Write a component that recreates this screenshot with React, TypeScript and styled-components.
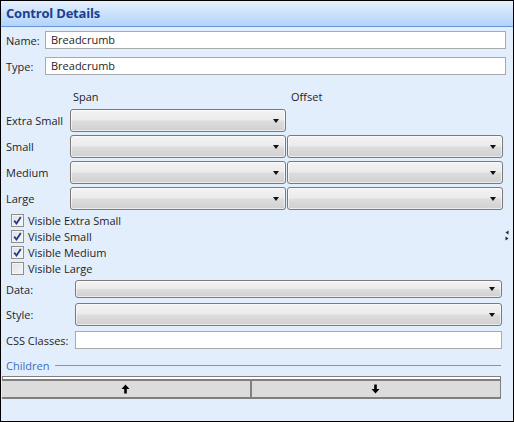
import React from "react";
import styled, { createGlobalStyle } from "styled-components";

const GlobalStyle = createGlobalStyle`
  html, body {
    margin: 0;
    padding: 0;
    background: #ffffff;
  }
  * {
    box-sizing: border-box;
  }
`;

const FONT = `"Open Sans", "Noto Sans", "Liberation Sans", sans-serif`;

const Panel = styled.div`
  position: relative;
  width: 514px;
  height: 422px;
  border: 1px solid #000;
  background: #e3eefd;
  font-family: ${FONT};
  font-size: 11px;
  color: #1e1e1e;
  display: flex;
  flex-direction: column;
`;

const Header = styled.div`
  height: 26px;
  padding: 3px 0 0 5px;
  background: linear-gradient(#e6f0fd, #b2d3fb);
  border-bottom: 1px solid #6895d6;
  color: #1b3f91;
  font-weight: 700;
  font-size: 13px;
  letter-spacing: -0.2px;
`;

const Body = styled.div`
  display: flex;
  flex-direction: column;
  padding: 0 0 0 5px;
`;

const FieldRow = styled.div<{ $top: number; $labelWidth: number }>`
  display: flex;
  align-items: center;
  margin-top: ${(p) => p.$top}px;
  & > label {
    width: ${(p) => p.$labelWidth}px;
    flex-shrink: 0;
  }
`;

const TextBox = styled.div<{ $width: number }>`
  width: ${(p) => p.$width}px;
  height: 18px;
  border: 1px solid #a8aaad;
  background: #fff;
  padding: 0 0 0 5px;
  line-height: 16px;
  font-size: 11px;
`;

const Combo = styled.div<{ $width: number; $height?: number }>`
  position: relative;
  width: ${(p) => p.$width}px;
  height: ${(p) => p.$height ?? 23}px;
  border: 1px solid #7a7a7a;
  border-radius: 3px;
  background: linear-gradient(#f3f3f3 0%, #ebebeb 48%, #dddddd 52%, #d0d0d0 100%);
  box-shadow: inset 0 0 0 1px rgba(255, 255, 255, 0.6);
  &::after {
    content: "";
    position: absolute;
    right: 6px;
    top: 50%;
    margin-top: -2px;
    border-left: 3.5px solid transparent;
    border-right: 3.5px solid transparent;
    border-top: 4px solid #111;
  }
`;

const ColHeads = styled.div`
  display: grid;
  grid-template-columns: 63px 218px 216px;
  margin-top: 14px;
  height: 16px;
  & > span:nth-child(2),
  & > span:nth-child(3) {
    padding-left: 4px;
  }
`;

const SizeGrid = styled.div`
  display: grid;
  grid-template-columns: 63px 216px 216px;
  column-gap: 1px;
  row-gap: 3px;
  margin-top: 4px;
  align-items: center;
`;

const Checks = styled.div`
  display: flex;
  flex-direction: column;
  margin-top: 2px;
  padding-left: 5px;
`;

const CheckRow = styled.label`
  display: flex;
  align-items: center;
  height: 16px;
  gap: 4px;
`;

const Box = styled.span`
  width: 13px;
  height: 13px;
  border: 1px solid #8e8f8f;
  background: linear-gradient(135deg, #e0e0e0, #f8f8f8);
  box-shadow: inset 0 0 0 1px #f4f4f4;
  display: flex;
  align-items: center;
  justify-content: center;
`;

const ChildrenHead = styled.div`
  display: flex;
  align-items: center;
  gap: 6px;
  margin-top: 9px;
  padding-right: 12px;
  color: #3a6cc0;
  &::after {
    content: "";
    flex: 1;
    height: 1px;
    background: #6a9ad8;
  }
`;

const ChildGrid = styled.div`
  margin: 3px 12px 0 -4px;
  border: 1px solid #7f7f7f;
  border-bottom: none;
  background: #fff;
  padding-top: 2px;
  display: grid;
  grid-template-columns: 1fr 1fr;
`;

const MoveButton = styled.div`
  height: 20px;
  background: #dcdcdc;
  border-top: 2px solid #7f7f7f;
  border-bottom: 2px solid #7f7f7f;
  display: flex;
  align-items: center;
  justify-content: center;
  &:first-child {
    border-right: 2px solid #7f7f7f;
    margin-left: -1px;
  }
`;

const Grip = styled.div`
  position: absolute;
  right: 4px;
  top: 229px;
  display: flex;
  flex-direction: column;
  gap: 1px;
`;

const Check = ({ on }: { on: boolean }) => (
  <Box>
    {on && (
      <svg width="9" height="9" viewBox="0 0 9 9">
        <path d="M1.2 4.6 L3.5 7.4 L7.8 1" stroke="#26398b" strokeWidth="1.8" fill="none" />
      </svg>
    )}
  </Box>
);

const Arrow = ({ up }: { up: boolean }) => (
  <svg width="9" height="10" viewBox="0 0 9 10">
    <g transform={up ? "" : "rotate(180 4.5 5)"}>
      <path d="M4.5 0.5 L8.5 5 L5.8 5 L5.8 9.5 L3.2 9.5 L3.2 5 L0.5 5 Z" fill="#000" />
    </g>
  </svg>
);

const sizes = ["Extra Small", "Small", "Medium", "Large"];

export default function App() {
  return (
    <>
      <GlobalStyle />
      <Panel>
        <Header>Control Details</Header>
        <Body>
          <FieldRow $top={4} $labelWidth={39}>
            <label>Name:</label>
            <TextBox $width={461}>Breadcrumb</TextBox>
          </FieldRow>
          <FieldRow $top={8} $labelWidth={39}>
            <label>Type:</label>
            <TextBox $width={461}>Breadcrumb</TextBox>
          </FieldRow>

          <ColHeads>
            <span />
            <span>Span</span>
            <span>Offset</span>
          </ColHeads>

          <SizeGrid>
            {sizes.map((s, i) => (
              <React.Fragment key={s}>
                <span>{s}</span>
                <Combo $width={216} />
                {i === 0 ? <span /> : <Combo $width={216} />}
              </React.Fragment>
            ))}
          </SizeGrid>

          <Checks>
            {sizes.map((s) => (
              <CheckRow key={s}>
                <Check on={s !== "Large"} />
                Visible {s}
              </CheckRow>
            ))}
          </Checks>

          <FieldRow $top={4} $labelWidth={69}>
            <label>Data:</label>
            <Combo $width={427} $height={18} />
          </FieldRow>
          <FieldRow $top={5} $labelWidth={69}>
            <label>Style:</label>
            <Combo $width={427} />
          </FieldRow>
          <FieldRow $top={5} $labelWidth={69}>
            <label>CSS Classes:</label>
            <TextBox $width={427} />
          </FieldRow>

          <ChildrenHead>Children</ChildrenHead>
          <ChildGrid>
            <MoveButton>
              <Arrow up />
            </MoveButton>
            <MoveButton>
              <Arrow up={false} />
            </MoveButton>
          </ChildGrid>
        </Body>
        <Grip>
          <svg width="4" height="11" viewBox="0 0 4 11">
            <path d="M3.5 0.5 L0.5 2.5 L3.5 4.5 Z" fill="#222" />
            <path d="M0.5 6.5 L3.5 8.5 L0.5 10.5 Z" fill="#222" />
          </svg>
        </Grip>
      </Panel>
    </>
  );
}
